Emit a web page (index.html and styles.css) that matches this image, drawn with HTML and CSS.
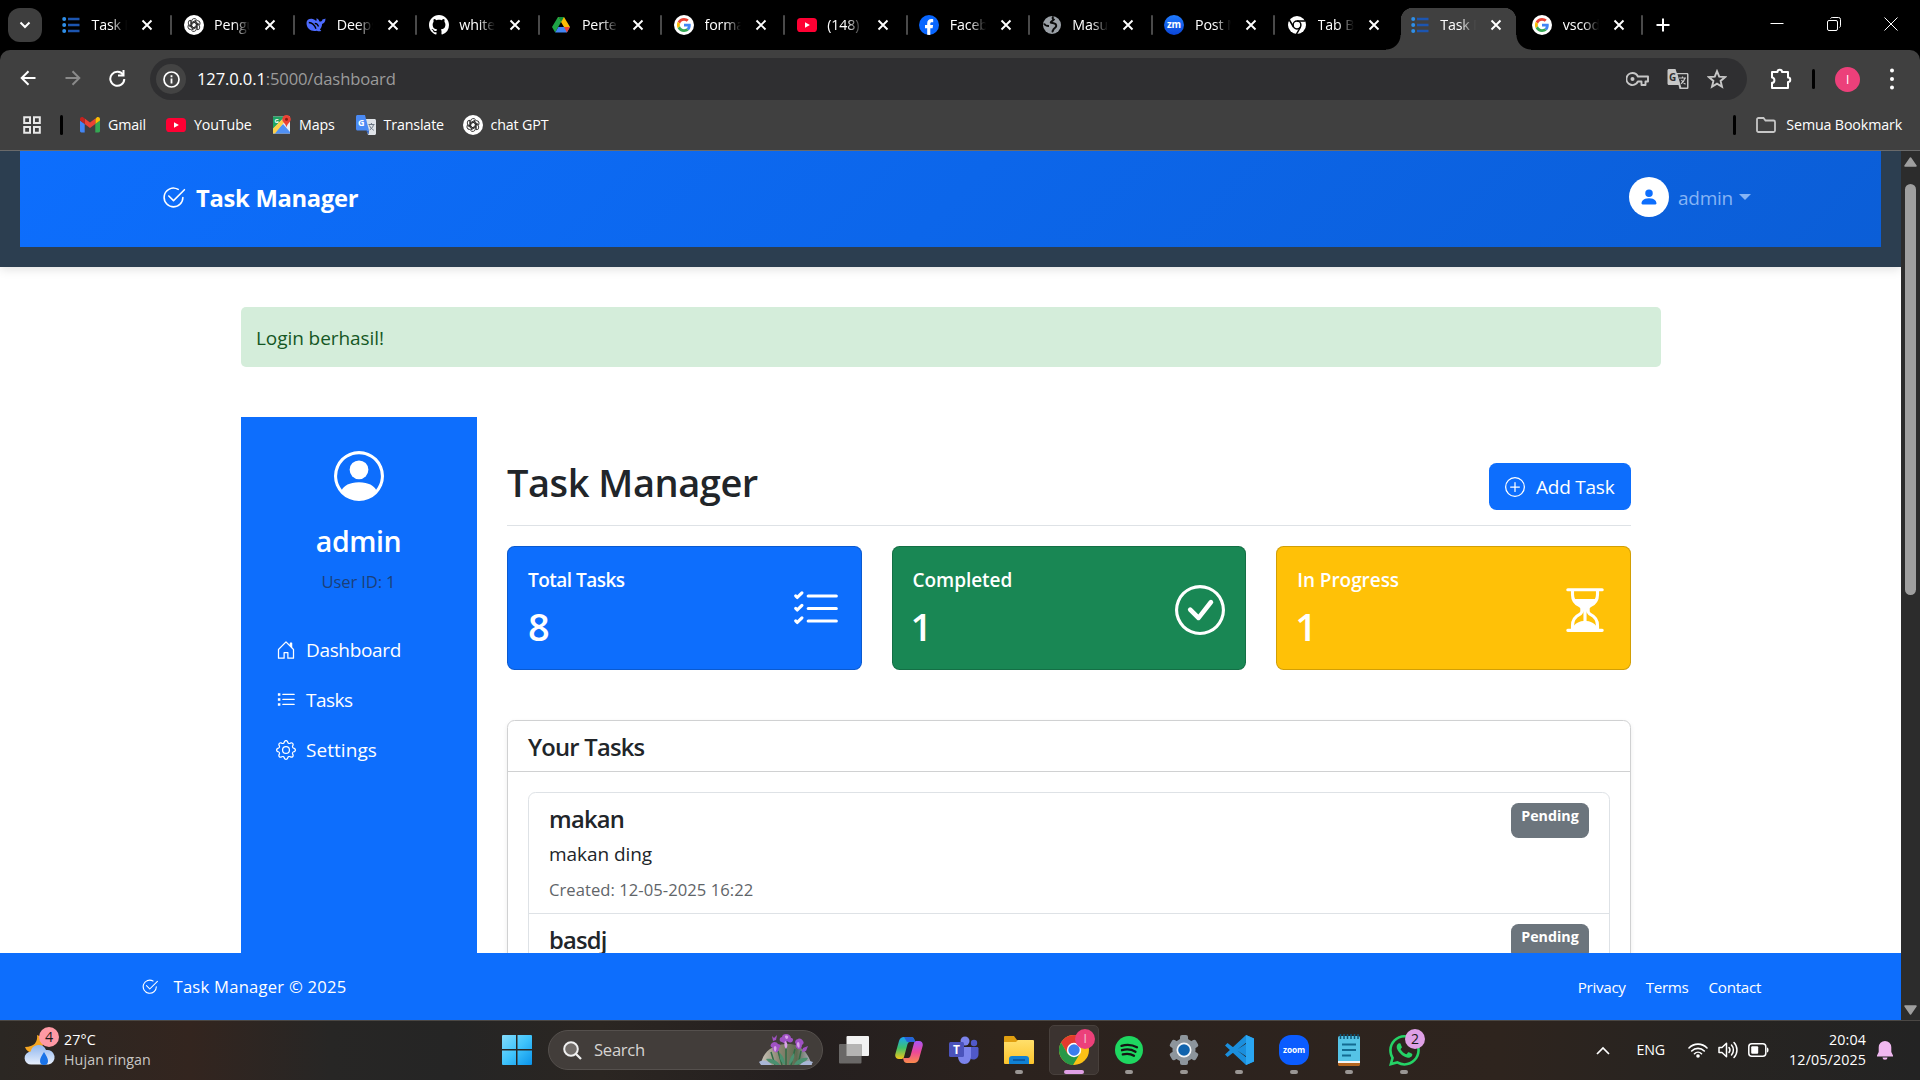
FILE: index.html
```html
<!DOCTYPE html>
<html lang="en">
<head>
<meta charset="utf-8">
<title>Task Manager</title>
<link rel="stylesheet" href="styles.css">
</head>
<body>
<svg class="defs" aria-hidden="true">
  <defs>
    <linearGradient id="g-zoom" x1="0" y1="0" x2="0" y2="1"><stop offset="0" stop-color="#1f7bff"/><stop offset="1" stop-color="#0b45d8"/></linearGradient>
    <linearGradient id="g-win" x1="0" y1="0" x2="1" y2="1"><stop offset="0" stop-color="#84dcfb"/><stop offset=".5" stop-color="#3fc3fb"/><stop offset="1" stop-color="#0a93ea"/></linearGradient>
    <linearGradient id="g-cloud" x1="0" y1="0" x2="0" y2="1"><stop offset="0" stop-color="#8fb6ef"/><stop offset="1" stop-color="#e8effc"/></linearGradient>
    <linearGradient id="g-cop1" x1="0" y1="0" x2="0" y2="1"><stop offset="0" stop-color="#1aa5f5"/><stop offset=".5" stop-color="#3fc06a"/><stop offset="1" stop-color="#f5c518"/></linearGradient>
    <linearGradient id="g-cop2" x1="0" y1="0" x2="0" y2="1"><stop offset="0" stop-color="#a855f7"/><stop offset=".5" stop-color="#ec4899"/><stop offset="1" stop-color="#fb8b4b"/></linearGradient>
    <linearGradient id="g-folder" x1="0" y1="0" x2="0" y2="1"><stop offset="0" stop-color="#ffdf6b"/><stop offset="1" stop-color="#fcc42c"/></linearGradient>
    <linearGradient id="g-rock" x1="0" y1="0" x2="1" y2="0"><stop offset="0" stop-color="#c9c4b8"/><stop offset=".35" stop-color="#8b8672"/><stop offset=".7" stop-color="#5d6a50"/><stop offset="1" stop-color="#b3b3c4"/></linearGradient>
  </defs>
  <symbol id="i-list" viewBox="0 0 20 20"><g fill="#2f8fe8"><circle cx="3.2" cy="4" r="2"/><circle cx="3.2" cy="10" r="2"/><circle cx="3.2" cy="16" r="2"/></g><path d="M7 4h11.5M7 10h11.5M7 16h11.5" stroke="#1c55b0" stroke-width="2.6"/></symbol>
  <symbol id="i-gpt" viewBox="0 0 20 20"><circle cx="10" cy="10" r="10" fill="#fff"/><g fill="none" stroke="#222" stroke-width=".9" stroke-linejoin="round"><path id="gpt-a" d="M7.6 11.4V6.200a2.700 2.700 0 0 1 4.900-1.500M12.400 4.900 8 7.400v2.400"/><use href="#gpt-a" transform="rotate(60 10 10)"/><use href="#gpt-a" transform="rotate(120 10 10)"/><use href="#gpt-a" transform="rotate(180 10 10)"/><use href="#gpt-a" transform="rotate(240 10 10)"/><use href="#gpt-a" transform="rotate(300 10 10)"/></g></symbol>
  <symbol id="i-google" viewBox="-10 -10 68 68"><circle cx="24" cy="24" r="34" fill="#fff"/><path fill="#EA4335" d="M24 9.500c3.540 0 6.710 1.220 9.210 3.600l6.850-6.850C35.900 2.380 30.470 0 24 0 14.620 0 6.510 5.380 2.560 13.220l7.980 6.190C12.430 13.720 17.740 9.500 24 9.500z"/><path fill="#4285F4" d="M46.980 24.550c0-1.570-.15-3.090-.38-4.550H24v9.020h12.940c-.58 2.960-2.260 5.480-4.780 7.180l7.730 6c4.510-4.180 7.090-10.360 7.090-17.650z"/><path fill="#FBBC05" d="M10.530 28.590c-.48-1.450-.76-2.990-.76-4.590s.27-3.140.76-4.590l-7.980-6.190C.92 16.460 0 20.120 0 24c0 3.880.92 7.540 2.560 10.780l7.970-6.190z"/><path fill="#34A853" d="M24 48c6.480 0 11.930-2.130 15.890-5.810l-7.730-6c-2.150 1.450-4.920 2.300-8.160 2.300-6.260 0-11.570-4.220-13.470-9.910l-7.980 6.190C6.510 42.620 14.620 48 24 48z"/></symbol>
  <symbol id="i-yt" viewBox="0 0 20 20"><rect y="3" width="20" height="14" rx="3.600" fill="#ff0033"/><path d="M8 7.200v5.600l4.900-2.800z" fill="#fff"/></symbol>
  <symbol id="b-check2c" viewBox="0 0 16 16"><path d="M2.500 8a5.500 5.500 0 0 1 8.250-4.764.5.5 0 0 0 .5-.866A6.500 6.500 0 1 0 14.500 8a.5.5 0 0 0-1 0 5.500 5.500 0 1 1-11 0z"/><path d="M15.354 3.354a.5.5 0 0 0-.708-.708L8 9.293 5.354 6.646a.5.5 0 1 0-.708.708l3 3a.5.5 0 0 0 .708 0l7-7z"/></symbol>
  <symbol id="b-person" viewBox="0 0 16 16"><path d="M3 14s-1 0-1-1 1-4 6-4 6 3 6 4-1 1-1 1H3Zm5-6a3 3 0 1 0 0-6 3 3 0 0 0 0 6Z"/></symbol>
  <symbol id="b-personc" viewBox="0 0 16 16"><path d="M11 6a3 3 0 1 1-6 0 3 3 0 0 1 6 0z"/><path fill-rule="evenodd" d="M0 8a8 8 0 1 1 16 0A8 8 0 0 1 0 8zm8-7a7 7 0 0 0-5.468 11.370C3.242 11.226 4.805 10 8 10s4.757 1.225 5.468 2.370A7 7 0 0 0 8 1z"/></symbol>
  <symbol id="b-house" viewBox="0 0 16 16"><path d="M8.354 1.146a.5.5 0 0 0-.708 0l-6 6A.5.5 0 0 0 1.500 7.500v7a.5.5 0 0 0 .5.5h4.500a.5.5 0 0 0 .5-.5v-4h2v4a.5.5 0 0 0 .5.5H14a.5.5 0 0 0 .5-.5v-7a.5.5 0 0 0-.146-.354L13 5.793V2.500a.5.5 0 0 0-.5-.5h-1a.5.5 0 0 0-.5.5v1.293L8.354 1.146zM2.500 14V7.707l5.500-5.500 5.500 5.500V14H10v-4a.5.5 0 0 0-.5-.5h-3a.5.5 0 0 0-.5.5v4H2.500z"/></symbol>
  <symbol id="b-task" viewBox="0 0 16 16"><path d="M1.500 2.500h2v2h-2zM1.500 6.500h2v2h-2zM1.500 10.500h2v2h-2z"/><path d="M5.500 3h9a.5.5 0 0 1 0 1h-9a.5.5 0 0 1 0-1zM5.500 7a.5.5 0 0 0 0 1h9a.5.5 0 0 0 0-1h-9zm0 4a.5.5 0 0 0 0 1h9a.5.5 0 0 0 0-1h-9z"/></symbol>
  <symbol id="b-gear" viewBox="0 0 16 16"><path d="M8 4.754a3.246 3.246 0 1 0 0 6.492 3.246 3.246 0 0 0 0-6.492zM5.754 8a2.246 2.246 0 1 1 4.492 0 2.246 2.246 0 0 1-4.492 0z"/><path d="M9.796 1.343c-.527-1.790-3.065-1.790-3.592 0l-.094.319a.873.873 0 0 1-1.255.52l-.292-.16c-1.640-.892-3.433.902-2.540 2.541l.159.292a.873.873 0 0 1-.52 1.255l-.319.094c-1.790.527-1.790 3.065 0 3.592l.319.094a.873.873 0 0 1 .52 1.255l-.16.292c-.892 1.640.901 3.434 2.541 2.540l.292-.159a.873.873 0 0 1 1.255.52l.094.319c.527 1.790 3.065 1.790 3.592 0l.094-.319a.873.873 0 0 1 1.255-.52l.292.16c1.640.893 3.434-.902 2.540-2.541l-.159-.292a.873.873 0 0 1 .52-1.255l.319-.094c1.790-.527 1.790-3.065 0-3.592l-.319-.094a.873.873 0 0 1-.52-1.255l.16-.292c.893-1.640-.902-3.433-2.541-2.540l-.292.159a.873.873 0 0 1-1.255-.52l-.094-.319zm-2.633.283c.246-.835 1.428-.835 1.674 0l.094.319a1.873 1.873 0 0 0 2.693 1.115l.291-.16c.764-.415 1.600.42 1.184 1.185l-.159.292a1.873 1.873 0 0 0 1.116 2.692l.318.094c.835.246.835 1.428 0 1.674l-.319.094a1.873 1.873 0 0 0-1.115 2.693l.16.291c.415.764-.42 1.600-1.185 1.184l-.291-.159a1.873 1.873 0 0 0-2.693 1.116l-.094.318c-.246.835-1.428.835-1.674 0l-.094-.319a1.873 1.873 0 0 0-2.692-1.115l-.292.16c-.764.415-1.600-.42-1.184-1.185l.159-.291A1.873 1.873 0 0 0 1.945 8.930l-.319-.094c-.835-.246-.835-1.428 0-1.674l.319-.094A1.873 1.873 0 0 0 3.060 4.377l-.16-.292c-.415-.764.42-1.600 1.185-1.184l.292.159a1.873 1.873 0 0 0 2.692-1.115l.094-.319z"/></symbol>
  <symbol id="b-listcheck" viewBox="0 0 16 16"><path d="M5.500 3h9a.5.5 0 0 1 0 1h-9a.5.5 0 0 1 0-1zm0 4h9a.5.5 0 0 1 0 1h-9a.5.5 0 0 1 0-1zm0 4h9a.5.5 0 0 1 0 1h-9a.5.5 0 0 1 0-1z"/><path id="lc" d="M3.854 2.146a.5.5 0 0 1 0 .708l-1.500 1.500a.5.5 0 0 1-.708 0l-.5-.5a.5.5 0 1 1 .708-.708L2 3.293l1.146-1.147a.5.5 0 0 1 .708 0z"/><use href="#lc" y="4"/><use href="#lc" y="8"/></symbol>
  <symbol id="b-checkc" viewBox="0 0 16 16"><path d="M8 15A7 7 0 1 1 8 1a7 7 0 0 1 0 14zm0 1A8 8 0 1 0 8 0a8 8 0 0 0 0 16z"/><path d="M10.970 4.970a.235.235 0 0 0-.02.022L7.477 9.417 5.384 7.323a.75.75 0 0 0-1.060 1.060L6.970 11.030a.75.75 0 0 0 1.079-.02l3.992-4.990a.75.75 0 0 0-1.071-1.050z"/></symbol>
  <symbol id="b-plusc" viewBox="0 0 16 16"><path d="M8 15A7 7 0 1 1 8 1a7 7 0 0 1 0 14zm0 1A8 8 0 1 0 8 0a8 8 0 0 0 0 16z"/><path d="M8 4a.5.5 0 0 1 .5.5v3h3a.5.5 0 0 1 0 1h-3v3a.5.5 0 0 1-1 0v-3h-3a.5.5 0 0 1 0-1h3v-3A.5.5 0 0 1 8 4z"/></symbol>
  <symbol id="b-hour" viewBox="0 0 16 16"><path d="M2.500 15a.5.5 0 1 1 0-1h1v-1a4.500 4.500 0 0 1 2.557-4.060c.29-.139.443-.377.443-.59v-.7c0-.213-.154-.451-.443-.59A4.500 4.500 0 0 1 3.500 3V2h-1a.5.5 0 0 1 0-1h11a.5.5 0 0 1 0 1h-1v1a4.500 4.500 0 0 1-2.557 4.060c-.29.139-.443.377-.443.59v.7c0 .213.154.451.443.59A4.500 4.500 0 0 1 12.500 13v1h1a.5.5 0 0 1 0 1h-11zm2-13v1c0 .537.12 1.045.337 1.500h6.326c.216-.455.337-.963.337-1.500V2h-7zm3 6.350c0 .701-.478 1.236-1.011 1.492A3.500 3.500 0 0 0 4.500 13s.866-1.299 3-1.480V8.350zm1 0v3.170c2.134.181 3 1.480 3 1.480a3.500 3.500 0 0 0-1.989-3.158C8.978 9.586 8.500 9.052 8.500 8.351z"/></symbol>
  <symbol id="i-x" viewBox="0 0 12 12"><path d="m1.500 1.500 9 9m0-9-9 9" stroke="#fff" stroke-width="1.900" fill="none"/></symbol>
</svg>

<div class="tabstrip">
  <div class="tabsearch"><svg width="12" height="12" viewBox="0 0 12 12"><path d="m1.500 3.500 4.500 4.500 4.500-4.500" fill="none" stroke="#fff" stroke-width="2"/></svg></div>
  <div class="tabs">
    <div class="tab"><svg class="fav"><use href="#i-list"/></svg><span class="tt">Task M</span><svg class="x"><use href="#i-x"/></svg></div>
    <div class="tab"><svg class="fav"><use href="#i-gpt"/></svg><span class="tt">Pengu</span><svg class="x"><use href="#i-x"/></svg></div>
    <div class="tab"><svg class="fav" viewBox="0 0 20 20"><path d="M.5 8C.5 5.200 2.800 3.600 5.600 3.800c1.700.1 3 1 4.500 2.200.6-.5.600-1.500.3-2.800 1.700.5 2.700 1.900 3 3.300 1.600.3 2.900-.3 3.200-2.300 1 .1 2 0 2.900-.6-.1 3.200-1.300 5-3.400 5.400-.1 2.600-1.100 4.300-2.300 5.500.7.500 1.500.8 1.400 1.300-1.100.9-3.200.6-4.300-.1C5.200 17 .5 13.600.5 8z" fill="#4d6bfe"/><path d="M2.800 7.500c3 .1 5.800 2.800 7.200 6.300M8.800 8.300c1.700.1 3.200 1.300 3.700 3.200" fill="none" stroke="#000" stroke-width="1.300"/></svg><span class="tt">Deeps</span><svg class="x"><use href="#i-x"/></svg></div>
    <div class="tab"><svg class="fav" viewBox="0 0 16 16"><path fill="#fff" d="M8 0C3.580 0 0 3.580 0 8c0 3.540 2.290 6.530 5.470 7.590.4.070.55-.17.55-.38 0-.19-.01-.82-.01-1.490-2.010.37-2.530-.49-2.690-.94-.09-.23-.48-.94-.82-1.130-.28-.15-.68-.52-.01-.53.63-.01 1.080.58 1.230.82.72 1.210 1.870.87 2.330.66.070-.52.28-.87.51-1.070-1.780-.2-3.640-.89-3.640-3.950 0-.87.31-1.590.82-2.150-.08-.2-.36-1.020.08-2.120 0 0 .67-.21 2.200.82.64-.18 1.320-.27 2-.27.68 0 1.360.09 2 .27 1.530-1.040 2.200-.82 2.200-.82.44 1.100.16 1.920.08 2.120.51.56.82 1.270.82 2.150 0 3.070-1.870 3.750-3.650 3.950.29.25.54.73.54 1.480 0 1.070-.01 1.930-.01 2.200 0 .21.15.46.55.38A8.010 8.010 0 0 0 16 8c0-4.420-3.580-8-8-8z"/></svg><span class="tt">whitel</span><svg class="x"><use href="#i-x"/></svg></div>
    <div class="tab"><svg class="fav" viewBox="0 0 20 20"><path d="M7 2h6L7.200 12 4.200 17.600 1 12z" fill="#1ea446"/><path d="M7 2h6l6 10h-6z" fill="#fbbc04"/><path d="M7 2h6l-3 5.200z" fill="#0f8c3a"/><path d="M4.200 17.600 7.300 12H19l-3.100 5.600z" fill="#4285f4"/><path d="M13 12h6l-3.100 5.600z" fill="#ea4335"/></svg><span class="tt">Perten</span><svg class="x"><use href="#i-x"/></svg></div>
    <div class="tab"><svg class="fav"><use href="#i-google"/></svg><span class="tt">forma</span><svg class="x"><use href="#i-x"/></svg></div>
    <div class="tab"><svg class="fav"><use href="#i-yt"/></svg><span class="tt">(148)</span><svg class="x"><use href="#i-x"/></svg></div>
    <div class="tab"><svg class="fav" viewBox="0 0 20 20"><circle cx="10" cy="10" r="10" fill="#0866ff"/><path d="M8.200 19.800v-6.600H6v-3.100h2.200V8.600c0-3 1.400-4.500 4.300-4.500.6 0 1.300.1 1.700.2v2.900h-1.300c-1.300 0-1.600.6-1.600 1.700v1.200h2.800l-.5 3.100h-2.300v6.700z" fill="#fff"/></svg><span class="tt">Faceb</span><svg class="x"><use href="#i-x"/></svg></div>
    <div class="tab"><svg class="fav" viewBox="0 0 20 20"><circle cx="10" cy="10" r="9" fill="#9aa0a6"/><path d="M11.500 1.500c-1.500.9-1 2.500.3 3.200-.6 1.300-3 1.300-3 2.800 1.500.8 4.700.2 5.400 2.600.8 2.500-2.500 2.700-3 4.900-.2 1-.5 1.500-1.500 1.800M2 8.500c.8 2 2.500 2.500 5 2.500" fill="none" stroke="#0c0c0c" stroke-width="2"/></svg><span class="tt">Masuk</span><svg class="x"><use href="#i-x"/></svg></div>
    <div class="tab"><svg class="fav" viewBox="0 0 20 20"><circle cx="10" cy="10" r="10" fill="url(#g-zoom)"/><text x="10" y="13" font-size="10" font-weight="700" fill="#fff" text-anchor="middle" textLength="14" lengthAdjust="spacingAndGlyphs">zm</text></svg><span class="tt">Post M</span><svg class="x"><use href="#i-x"/></svg></div>
    <div class="tab nosep"><svg class="fav" viewBox="0 0 20 20"><circle cx="10" cy="10" r="9" fill="#fff"/><circle cx="10" cy="10" r="3.900" fill="#fff" stroke="#000" stroke-width="1.500"/><path d="M10 5.900h8.200M6.500 12 2.400 5M13.500 12l-4 7.200" stroke="#000" stroke-width="1.500"/></svg><span class="tt">Tab Ba</span><svg class="x"><use href="#i-x"/></svg></div>
    <div class="tab active nosep"><svg class="fav"><use href="#i-list"/></svg><span class="tt">Task M</span><svg class="x"><use href="#i-x"/></svg></div>
    <div class="tab"><svg class="fav"><use href="#i-google"/></svg><span class="tt">vscod</span><svg class="x"><use href="#i-x"/></svg></div>
  </div>
  <svg class="newtab" width="14" height="14" viewBox="0 0 14 14"><path d="M7 .5v13M.5 7h13" stroke="#fff" stroke-width="2"/></svg>
  <div class="winctl">
    <svg width="14" height="14" viewBox="0 0 14 14"><path d="M.5 6.500h13" stroke="#fff"/></svg>
    <svg width="14" height="14" viewBox="0 0 14 14"><g fill="none" stroke="#fff"><rect x=".5" y="3.500" width="10" height="10" rx="1.500"/><path d="M3.500 1.500c.4-.7 1-1 1.700-1h6.300a2 2 0 0 1 2 2v6.300c0 .7-.3 1.300-1 1.700"/></g></svg>
    <svg width="14" height="14" viewBox="0 0 14 14"><path d="m.5.5 13 13m0-13-13 13" stroke="#fff" fill="none"/></svg>
  </div>
</div>

<div class="toolbar">
  <div class="nav-btns">
    <svg width="16" height="16" viewBox="0 0 16 16"><path d="M15.500 8H2M8.500 1.200 1.700 8l6.800 6.800" fill="none" stroke="#fff" stroke-width="2"/></svg>
    <svg width="16" height="16" viewBox="0 0 16 16"><path d="M.5 8H14M7.500 1.200 14.300 8l-6.800 6.800" fill="none" stroke="#8a8a8a" stroke-width="2"/></svg>
    <svg width="17" height="17" viewBox="0 0 17 17"><path d="M14.300 5.200A7 7 0 1 0 15.300 9" fill="none" stroke="#fff" stroke-width="2"/><path d="M15.500 0v6.500H9V4.500h4.500V0z" fill="#fff"/></svg>
  </div>
  <div class="omnibox">
    <span class="info"><svg width="17" height="17" viewBox="0 0 17 17"><circle cx="8.500" cy="8.500" r="7.500" fill="none" stroke="#fff" stroke-width="1.700"/><path d="M8.500 7.500v5M8.500 4.300v1.900" stroke="#fff" stroke-width="1.800"/></svg></span>
    <span class="url"><b>127.0.0.1</b>:5000/dashboard</span>
    <span class="omni-icons">
      <svg width="23" height="14" viewBox="0 0 23 14"><path d="M6.500 1a6 6 0 1 0 5.400 8.500h3.600V13h4V9.500H22V4.500H11.900A6 6 0 0 0 6.500 1z" fill="none" stroke="#c7c7c7" stroke-width="1.900" stroke-linejoin="round"/><circle cx="6.500" cy="7" r="2" fill="#c7c7c7"/></svg>
      <svg width="22" height="21" viewBox="0 0 22 21"><path d="M2 0h6.500l1.300 4H20c1 0 1.500.6 1.500 1.500v13c0 1-.6 1.500-1.500 1.500h-7.500l-1-4H2c-1 0-1.500-.6-1.500-1.500v-13C.5.600 1.100 0 2 0z" fill="#c7c7c7"/><path d="m10.500 5.300 3.800 13.200H20V5.300z" fill="#2f2f31"/><text x="2" y="11.500" font-size="10" font-weight="700" fill="#2f2f31">G</text><path d="M12 9h7M15.500 7.500V9M18 9c-.6 2.600-2 4.200-4 5.700M14.500 11c.9 1.800 2 3 4 4.200" fill="none" stroke="#c7c7c7" stroke-width="1.200"/></svg>
      <svg width="20" height="20" viewBox="0 0 20 20"><path d="m10 2.200 2.200 5.500 5.900.4-4.500 3.800 1.400 5.800L10 14.600l-5 3.100 1.400-5.800L1.900 8.100l5.900-.4z" fill="none" stroke="#c7c7c7" stroke-width="1.900"/></svg>
    </span>
  </div>
  <div class="tool-right">
    <svg class="puzzle" width="22" height="22" viewBox="0 0 22 22"><path d="M2 4h5.500c0-3 4.500-3 4.500 0h6v5.500c3 0 3 4.500 0 4.500v6H2v-5.200c3.200 0 3.200-5.300 0-5.300z" fill="none" stroke="#fff" stroke-width="2" stroke-linejoin="round"/></svg>
    <i class="vsep"></i>
    <span class="profile">I</span>
    <svg width="4" height="22" viewBox="0 0 4 22"><g fill="#fff"><circle cx="2" cy="2.500" r="2"/><circle cx="2" cy="11" r="2"/><circle cx="2" cy="19.500" r="2"/></g></svg>
  </div>
</div>

<div class="bookmarks">
  <svg class="apps" width="18" height="18" viewBox="0 0 18 18"><path d="M1.200 1.200H7V7H1.200zM11 1.200h5.800V7H11zM1.200 11H7v5.800H1.200zM11 11h5.800v5.800H11z" fill="none" stroke="#e8e8e8" stroke-width="2"/></svg>
  <i class="vsep"></i>
  <a class="bm bm1"><svg class="fav" viewBox="0 0 20 20"><path d="M1.400 17.500h3.300V9L0 5.500v10.600c0 .8.600 1.400 1.400 1.400z" fill="#4285f4"/><path d="M15.300 17.500h3.300c.8 0 1.400-.6 1.400-1.400V5.500L15.300 9z" fill="#34a853"/><path d="M15.300 4v5L20 5.500V4.200c0-2-2-2.800-3.300-1.700z" fill="#fbbc04"/><path d="M4.700 9V3.500L10 7.500l5.300-4V9L10 13z" fill="#ea4335"/><path d="M0 4.200v1.300L4.700 9V3.600L3.300 2.500C2 1.400 0 2.200 0 4.200z" fill="#c5221f"/></svg>Gmail</a>
  <a class="bm bm2"><svg class="fav"><use href="#i-yt"/></svg>YouTube</a>
  <a class="bm bm3"><svg class="fav" viewBox="0 0 20 20"><rect x="1" y="1.500" width="17" height="17" fill="#e9ecef"/><path d="M1 1.500h12L1 14z" fill="#1fa463"/><path d="M1 18.500 11 9l7 8v1.500z" fill="#4f90f5"/><path d="m1 13.500 9-9 2 3L3 18.500H1z" fill="#fdd04b"/><text x="2.500" y="8" font-size="6" font-weight="700" fill="#fff">G</text><path d="M14.500 0a4.300 4.300 0 0 1 4.300 4.300c0 3-3.500 4.200-4.300 8-.8-3.800-4.300-5-4.300-8A4.300 4.300 0 0 1 14.500 0z" fill="#ea4335"/><circle cx="14.500" cy="4.300" r="1.500" fill="#8c1a12"/></svg>Maps</a>
  <a class="bm bm4"><svg class="fav" viewBox="0 0 20 20"><path d="M8 4h10.500c.8 0 1.500.7 1.500 1.500v13c0 .8-.7 1.500-1.500 1.500H12z" fill="#dfe3e8"/><path d="M1.500 0H9l4 15.500H1.500C.7 15.500 0 14.800 0 14V1.500C0 .7.7 0 1.500 0z" fill="#4a8af4"/><path d="m13 15.500-3 .1 2.600 4.200z" fill="#2f62c4"/><text x="2" y="11" font-size="9" font-weight="700" fill="#fff">G</text><path d="M12.500 9.500h6M15.400 8v1.500M17.500 9.500c-.4 2.400-2 4.200-3.800 5.400M13.500 10.500c.8 2 2.400 3.600 4.300 4.800" fill="none" stroke="#6b7683" stroke-width="1"/></svg>Translate</a>
  <a class="bm bm5"><svg class="fav"><use href="#i-gpt"/></svg>chat GPT</a>
  <i class="vsep end"></i>
  <a class="bm bm6"><svg width="20" height="16" viewBox="0 0 20 16"><path d="M1 13.500v-11C1 1.700 1.700 1 2.500 1h5l2 2.500h8c.8 0 1.500.7 1.500 1.500v8.500c0 .8-.7 1.500-1.500 1.500h-15c-.8 0-1.500-.7-1.500-1.500z" fill="none" stroke="#c7c7c7" stroke-width="1.800"/></svg>Semua Bookmark</a>
</div>

<div class="viewport">
  <div class="page">
    <div class="content">
      <header class="site-header">
        <nav class="navbar">
          <a class="brand"><svg width="25" height="25"><use href="#b-check2c"/></svg><span>Task Manager</span></a>
          <div class="user"><span class="avatar"><svg width="20" height="20"><use href="#b-person"/></svg></span><span class="uname">admin</span><i class="caret"></i></div>
        </nav>
      </header>
      <div class="container">
        <div class="alert">Login berhasil!</div>
        <div class="row">
          <aside class="sidebar">
            <svg class="bigavatar" width="50" height="50"><use href="#b-personc"/></svg>
            <h4>admin</h4>
            <small>User ID: 1</small>
            <ul>
              <li class="tight"><svg width="20" height="20"><use href="#b-house"/></svg>Dashboard</li>
              <li class="tighter"><svg width="20" height="20"><use href="#b-task"/></svg>Tasks</li>
              <li class="loose"><svg width="20" height="20"><use href="#b-gear"/></svg>Settings</li>
            </ul>
          </aside>
          <main class="main">
            <div class="titlebar"><h1>Task Manager</h1><button class="btn"><svg width="20" height="20"><use href="#b-plusc"/></svg>Add Task</button></div>
            <div class="cards">
              <div class="card blue"><div><h6 class="tighter">Total Tasks</h6><h2>8</h2></div><svg width="50" height="50"><use href="#b-listcheck"/></svg></div>
              <div class="card green"><div><h6>Completed</h6><h2 class="one">1</h2></div><svg width="50" height="50"><use href="#b-checkc"/></svg></div>
              <div class="card yellow"><div><h6>In Progress</h6><h2 class="one">1</h2></div><svg width="50" height="50"><use href="#b-hour"/></svg></div>
            </div>
            <section class="panel">
              <h5 class="panel-head">Your Tasks</h5>
              <div class="list">
                <div class="item"><div><h5>makan</h5><p>makan ding</p><small>Created: 12-05-2025 16:22</small></div><span class="badge">Pending</span></div>
                <div class="item"><div><h5>basdj</h5></div><span class="badge">Pending</span></div>
              </div>
            </section>
          </main>
        </div>
      </div>
    </div>
    <footer class="footer">
      <span class="copy"><svg width="17.500" height="17.500"><use href="#b-check2c"/></svg>Task Manager © 2025</span>
      <span class="links"><a>Privacy</a><a>Terms</a><a>Contact</a></span>
    </footer>
  </div>
  <div class="scrollbar">
    <svg width="13" height="10" viewBox="0 0 13 10"><path d="M6.500 1 12 9H1z" fill="#9f9f9f" stroke="#9f9f9f" stroke-width="1.500" stroke-linejoin="round"/></svg>
    <i class="thumb"></i>
    <svg class="down" width="13" height="10" viewBox="0 0 13 10"><path d="M6.500 9 12 1H1z" fill="#9f9f9f" stroke="#9f9f9f" stroke-width="1.500" stroke-linejoin="round"/></svg>
  </div>
</div>

<div class="taskbar">
  <div class="weather">
    <span class="wicon"><svg width="32" height="32" viewBox="0 0 32 32"><path d="M13 1c1 7-3 12-12 12 2 6 10 8 15 3S20 3 13 1z" fill="#f5a623"/><path d="M7.500 30.500a6.500 6.500 0 0 1-.8-13A8 8 0 0 1 22 16a7.300 7.300 0 0 1 2.500 14.500z" fill="url(#g-cloud)"/><path d="M20 18c2.500 4 4 6.300 4 9a4 4 0 0 1-8 0c0-2.700 1.500-5 4-9z" fill="#1a73e8"/></svg><b class="wbadge">4</b></span>
    <div class="wtext"><span>27°C</span><span class="dim">Hujan ringan</span></div>
  </div>
  <svg class="start" width="30" height="30" viewBox="0 0 30 30"><path d="M1 0h13v14H0V1a1 1 0 0 1 1-1zM15.500 0H29a1 1 0 0 1 1 1v13H15.500zM0 15.500h14V30H1a1 1 0 0 1-1-1zM15.500 15.500H30V29a1 1 0 0 1-1 1H15.500z" fill="url(#g-win)"/></svg>
  <div class="search">
    <svg width="19" height="19" viewBox="0 0 19 19"><circle cx="8" cy="8" r="6.800" fill="#716c69" stroke="#f0f0f0" stroke-width="2"/><path d="m13 13 5 5" stroke="#f0f0f0" stroke-width="2.300"/></svg>
    <span>Search</span>
    <svg class="iris" width="56" height="32" viewBox="0 0 56 32"><path d="M3 31C4 20 12 11 28 10s22 10 26 21z" fill="url(#g-rock)"/><path d="M17 31 13 18M24 31l-4-14M28 31V12M33 31l4-16M40 31l3-14" stroke="#2f6b46" stroke-width="1.500" fill="none"/><path d="M22 31c-3-5-9-7-14-6 3 4 8 6 14 6zM36 31c2-5 8-8 14-7-2 4-8 7-14 7zM27 31c-5-3-6-8-5-12 4 4 5 8 5 12zM31 31c4-3 6-7 5-12-4 4-5 8-5 12z" fill="#4b9070"/><path d="M1 28c5-3 9-1 13 3H3zM42 31c3-4 8-5 13-3l-2 3z" fill="#a9b6d6"/><g fill="#a052c4"><path d="M28 0c3 0 5 2 5 4 2 0 3 2 1 4-2 1-4 0-5-1-1 2-3 3-5 1-2 0-3-2-2-4 1-1 2-1 2-1 0-2 2-3 4-3z"/><path d="M40 5c2-1 4 0 5 2 1 1 1 3-1 4 0 3-2 5-4 4s-3-3-2-5c-2-2 0-5 2-5zM14 9c2-2 5-1 6 1 3 0 3 3 1 4 0 3-2 5-4 4s-3-3-2-4c-3-1-3-3-1-5z"/><path d="m14 2 2 2 3-3-1 5-3 1zM45 14l5-2-2 5-4 1z"/></g><path d="M27 2c2-1 4 0 3 2s-3 1-3-2zM27 7c3 1 3 6 1 8-2-2-2-6-1-8zM40 8c2 0 2 5 1 6-2-1-3-5-1-6zM17 12c2 0 2 4 0 6-1-2-2-5 0-6z" fill="#d9a2ea"/></svg>
  </div>
  <div class="apps-row">
    <span class="app norun"><svg width="30" height="28" viewBox="0 0 30 28"><rect x="7.500" width="22.500" height="20" rx="1" fill="#f2f2f2"/><rect y="8" width="22.500" height="19.500" rx="1" fill="#6a6867"/><path d="M7.500 8h15v12h-15z" fill="#b5b4b3"/></svg></span>
    <span class="app norun"><svg width="28" height="28" viewBox="0 0 28 28"><path d="M9 1h7c2 0 3 1 3.500 3l.5 2h-5c-2 0-2.500 2-3 4l-3 11c-.5 1.500-1.500 2-3 2H4c-3 0-4.500-2.500-3.500-5.500L4 5c.8-2.500 2.500-4 5-4z" fill="url(#g-cop1)"/><path d="M9 1h7c2 0 3 1 3.500 3l.6 2H12z" fill="#2563d8"/><path d="M19 27h-7c-2 0-3-1-3.500-3L8 22h5c2 0 2.500-2 3-4l3-11c.5-1.500 1.500-2 3-2h2c3 0 4.500 2.500 3.500 5.500L24 23c-.8 2.500-2.500 4-5 4z" fill="url(#g-cop2)"/></svg></span>
    <span class="app norun"><svg width="30" height="28" viewBox="0 0 30 28"><circle cx="25" cy="7" r="3.200" fill="#5059c9"/><circle cx="16" cy="5" r="4.500" fill="#7b83eb"/><path d="M20 11h8c1 0 1.500.6 1.500 1.500V18c0 3-2 5.500-5 5.500s-4.500-2-4.500-5z" fill="#5059c9"/><path d="M9 11h13v9c0 4.500-2.500 8-6.500 8S9 24.500 9 20z" fill="#7b83eb"/><rect y="6" width="15" height="15" rx="1.500" fill="#4b53bc"/><text x="7.500" y="18" font-size="12" font-weight="700" fill="#fff" text-anchor="middle">T</text></svg></span>
    <span class="app"><svg width="30" height="28" viewBox="0 0 30 28"><path d="M1 0h9l3 4h15v8H0V1a1 1 0 0 1 1-1z" fill="#e09f10"/><path d="M0 6h12l2-2h15a1 1 0 0 1 1 1v22a1 1 0 0 1-1 1H1a1 1 0 0 1-1-1z" fill="url(#g-folder)"/><path d="M5 28v-5a3 3 0 0 1 3-3h14a3 3 0 0 1 3 3v5z" fill="#1081d4"/><path d="M9 24h12" stroke="#0a4f94" stroke-width="1.500"/></svg></span>
    <span class="app current"><svg width="30" height="30" viewBox="0 0 30 30"><circle cx="15" cy="15" r="15" fill="#fbc116"/><path d="M15 0A15 15 0 0 0 2 7.500l6.500 11L15 8h13A15 15 0 0 0 15 0z" fill="#e33b2e"/><path d="M2 7.500A15 15 0 0 0 14 30l7-11.500-12.500 0z" fill="#269847"/><circle cx="15" cy="15" r="7.200" fill="#fff"/><circle cx="15" cy="15" r="5.700" fill="#3b7ded"/></svg><b class="bub pink">I</b></span>
    <span class="app"><svg width="28" height="28" viewBox="0 0 28 28"><circle cx="14" cy="14" r="14" fill="#1ed760"/><path d="M6.500 9.800c5-1.500 11-1 15.500 1.500M7 14.200c4.500-1.300 9.500-.8 13.500 1.500M7.800 18.400c4-1 8-.6 11.200 1.300" fill="none" stroke="#151515" stroke-width="2.300" stroke-linecap="round"/></svg></span>
    <span class="app"><svg width="30" height="30" viewBox="0 0 30 30"><g fill="#8d959c"><circle cx="15" cy="15" r="11.500"/><rect id="teeth" x="11" y="0" width="8" height="30" rx="2"/><use href="#teeth" transform="rotate(60 15 15)"/><use href="#teeth" transform="rotate(120 15 15)"/></g><circle cx="15" cy="15" r="7.500" fill="#f4f6f8"/><circle cx="15" cy="15" r="5.800" fill="#1063ad"/></svg></span>
    <span class="app"><svg width="30" height="30" viewBox="0 0 30 30"><path d="M22.500 8.500v13L12.500 15zM22 0l8 3.500v23L22 30 1 10.500 3.500 8l19 14.500v-15L3.500 22 1 19.500z" fill="#1b8fdd"/><path d="M22 0l8 3.500v23L22 30z" fill="#2aa6f2"/></svg></span>
    <span class="app"><svg width="30" height="30" viewBox="0 0 30 30"><rect width="30" height="30" rx="12" fill="#0b5cff"/><text x="15" y="18" font-size="9" font-weight="700" fill="#fff" text-anchor="middle" textLength="22" lengthAdjust="spacingAndGlyphs">zoom</text></svg></span>
    <span class="app"><svg width="22" height="32" viewBox="0 0 22 32"><rect y="2" width="22" height="28" rx="1.500" fill="#55c3e6"/><path d="M0 27h22v2H0z" fill="#f4f4f4"/><path d="M0 29h22v1.500c0 .8-.6 1.500-1.500 1.500h-19C.6 32 0 31.300 0 30.500z" fill="#b5651d"/><path d="M4 10.500h14M4 16h14M4 21.500h9" stroke="#136a91" stroke-width="2"/><path d="M2.500 0v5M6 0v5M9.500 0v5M13 0v5M16.500 0v5M20 0v5" stroke="#0f5677" stroke-width="1.500"/></svg></span>
    <span class="app"><svg width="31" height="31" viewBox="0 0 16 16"><path fill="#25d366" d="M13.601 2.326A7.854 7.854 0 0 0 7.994 0C3.627 0 .068 3.558.064 7.926c0 1.399.366 2.760 1.057 3.965L0 16l4.204-1.102a7.933 7.933 0 0 0 3.790.965h.004c4.368 0 7.926-3.558 7.930-7.930A7.898 7.898 0 0 0 13.600 2.326zM7.994 14.521a6.573 6.573 0 0 1-3.356-.92l-.24-.144-2.494.654.666-2.433-.156-.251a6.560 6.560 0 0 1-1.007-3.505c0-3.626 2.957-6.584 6.591-6.584a6.560 6.560 0 0 1 4.660 1.931 6.557 6.557 0 0 1 1.928 4.660c-.004 3.639-2.961 6.592-6.592 6.592zm3.615-4.934c-.197-.099-1.170-.578-1.353-.646-.182-.065-.315-.099-.445.099-.133.197-.513.646-.627.775-.114.133-.232.148-.43.05-.197-.1-.836-.308-1.592-.985-.59-.525-.985-1.175-1.103-1.372-.114-.198-.011-.304.088-.403.087-.088.197-.232.296-.346.1-.114.133-.198.198-.33.065-.134.034-.248-.015-.347-.05-.099-.445-1.076-.612-1.470-.16-.389-.323-.335-.445-.34-.114-.007-.247-.007-.38-.007a.729.729 0 0 0-.529.247c-.182.198-.691.677-.691 1.654 0 .977.71 1.916.81 2.049.098.133 1.394 2.132 3.383 2.992.47.205.84.326 1.129.418.475.152.904.129 1.246.08.38-.058 1.171-.48 1.338-.943.164-.464.164-.86.114-.943-.049-.084-.182-.133-.38-.232z"/></svg><b class="bub violet">2</b></span>
  </div>
  <div class="tray">
    <svg class="chev" width="14" height="9" viewBox="0 0 14 9"><path d="m1 8 6-6 6 6" fill="none" stroke="#fff" stroke-width="1.700"/></svg>
    <span class="eng">ENG</span>
    <svg width="20" height="16" viewBox="0 0 20 16"><g fill="none" stroke="#fff" stroke-width="1.600" stroke-linecap="round"><path d="M1 6a12.500 12.500 0 0 1 18 0M3.700 9a8.900 8.900 0 0 1 12.600 0M6.500 11.700a5 5 0 0 1 7 0"/></g><circle cx="10" cy="14" r="1.800" fill="#fff"/></svg>
    <svg width="20" height="18" viewBox="0 0 20 18"><g fill="none" stroke="#fff" stroke-width="1.500" stroke-linejoin="round" stroke-linecap="round"><path d="M1 6.500h3L8.500 2.300v13.400L4 11.500H1z"/><path d="M11 6.500a4 4 0 0 1 0 5M13.500 4a7.500 7.500 0 0 1 0 10M16 1.500a11 11 0 0 1 0 15"/></g></svg>
    <svg width="21" height="14" viewBox="0 0 21 14"><rect x=".8" y=".8" width="17" height="12.400" rx="3" fill="none" stroke="#fff" stroke-width="1.500"/><rect x="3.200" y="3.200" width="7" height="7.600" rx="1" fill="#fff"/><path d="M19 4.500c1 .2 1.500 1 1.500 2.500s-.5 2.300-1.500 2.500z" fill="#fff"/></svg>
    <div class="clock"><span>20:04</span><span>12/05/2025</span></div>
    <svg class="bell" width="16" height="19" viewBox="0 0 16 19"><path d="M8 0a6.300 6.300 0 0 1 6.300 6.300V11l1.700 3.500v1H0v-1L1.700 11V6.300A6.300 6.300 0 0 1 8 0zM5.500 16.500h5a2.500 2.300 0 0 1-5 0z" fill="#f0b8f0"/></svg>
  </div>
</div>
</body>
</html>
```
FILE: styles.css
```css
* { box-sizing: border-box; }
body { margin: 0; width: 1920px; height: 1080px; overflow: hidden; display: flex; flex-direction: column; background: #000; font: 14.25px/20px "Open Sans", "Noto Sans", sans-serif; letter-spacing: -.01em; color: #fff; }
svg { display: block; flex: none; fill: currentColor; }
h1, h2, h4, h5, h6, p, ul { margin: 0; padding: 0; font-weight: 600; }
i { display: block; flex: none; }
.defs { width: 0; height: 0; position: absolute; }
.fav { width: 20px; height: 20px; }

/* tab strip */
.tabstrip { height: 50px; flex: none; display: flex; align-items: flex-start; background: #000; }
.tabsearch { width: 34px; height: 34px; margin: 8px 6.300px 0 8px; border-radius: 12px; background: #3e3e3e; display: grid; place-items: center; }
.tabs { display: flex; height: 50px; }
.tab { width: 122.620px; height: 34px; margin-top: 8px; padding: 0 17px 0 12.700px; display: flex; align-items: center; position: relative; }
.tab::after { content: ""; position: absolute; right: -1px; top: 7px; width: 2px; height: 20px; border-radius: 1px; background: #4a4a4a; }
.tab.nosep::after { display: none; }
.tab .fav, .tab .tt, .tab .x { position: relative; }
.tt { width: 36px; margin-left: 10.500px; overflow: hidden; white-space: nowrap; mask-image: linear-gradient(90deg, #000 55%, transparent); }
.x { width: 12px; height: 12px; margin-left: 14px; }
.tab.active { height: 42px; padding-bottom: 8px; }
.tab.active::before { content: ""; position: absolute; top: 0; bottom: 0; left: -11px; right: -11px; background:
  radial-gradient(circle at 0 0, transparent 14px, #404040 15px) left bottom / 15px 15px no-repeat,
  radial-gradient(circle at 100% 0, transparent 14px, #404040 15px) right bottom / 15px 15px no-repeat,
  radial-gradient(circle at 12px 12px, #404040 12px, transparent 12.500px) 15px 0 / 12px 12px no-repeat,
  radial-gradient(circle at 0 12px, #404040 12px, transparent 12.500px) right 15px top 0 / 12px 12px no-repeat,
  linear-gradient(#404040, #404040) 27px 0 / calc(100% - 54px) 12px no-repeat,
  linear-gradient(#404040, #404040) 15px 12px / calc(100% - 30px) 30px no-repeat; }
.newtab { margin: 18px 0 0 13.500px; }
.winctl { margin: 17px 22px 0 auto; display: flex; gap: 43px; }

/* toolbar */
.toolbar { height: 50px; flex: none; display: flex; align-items: center; padding: 8px 26px 0 20px; background: #404040; border-radius: 10px 10px 0 0; }
.nav-btns { display: flex; align-items: center; gap: 28.500px; width: 130px; padding-bottom: 2px; }
.omnibox { width: 1597px; height: 42px; border-radius: 21px; background: #2f2f31; display: flex; align-items: center; padding: 0 20px 0 6px; }
.info { width: 30px; height: 30px; border-radius: 50%; background: #434343; display: grid; place-items: center; }
.url { margin-left: 11px; font-size: 16.600px; color: #9b9b9b; line-height: 24px; }
.url b { font-weight: 400; color: #fff; }
.omni-icons { margin-left: auto; display: flex; align-items: center; gap: 18px; }
.tool-right { margin-left: auto; display: flex; align-items: center; }
.puzzle { margin-right: 20px; }
.vsep { width: 3px; height: 20px; border-radius: 2px; background: #000; }
.profile { width: 25px; height: 25px; margin: 0 30px 0 20px; border-radius: 50%; background: #ec407a; font-size: 12px; text-align: center; line-height: 25px; }

/* bookmarks bar */
.bookmarks { height: 51px; flex: none; display: flex; align-items: center; padding: 0 18px 0 23px; background: #404040; border-bottom: 1px solid #6a6a6a; }
.bookmarks .vsep { margin-left: 19px; }
.bm { display: flex; align-items: center; gap: 8px; white-space: nowrap; }
.bm1 { width: 86px; margin-left: 17px; }
.bm2 { width: 106px; }
.bm3 { width: 83.500px; gap: 7px; }
.bm4 { width: 107px; }
.bookmarks .end { margin-left: auto; }
.bm6 { margin-left: 20px; gap: 10px; }

/* web page viewport */
.viewport { height: 869px; flex: none; display: flex; }
.page { width: 1901px; display: flex; flex-direction: column; background: #fff; color: #212529; font-size: 19px; line-height: 30px; }
.content { flex: 1; min-height: 0; overflow: hidden; }
.site-header { padding: 0 20px 20px; background: #2c3e50; box-shadow: 0 2px 10px rgba(0,0,0,.13); }
.navbar { height: 96px; padding: 0 130px 4px 141px; display: flex; align-items: center; justify-content: space-between; background: linear-gradient(135deg, #0d6efd, #0b5ed7); color: #fff; }
.brand { display: flex; align-items: center; gap: 10px; font-size: 23.750px; font-weight: 700; letter-spacing: -.012em; }
.brand span { padding-top: 2px; }
.user { display: flex; align-items: center; color: #86b4f5; }
.uname { padding-top: 2px; letter-spacing: -.013em; }
.avatar { width: 40px; height: 40px; margin-right: 9px; border-radius: 50%; background: #fff; color: #0d6efd; display: grid; place-items: center; }
.caret { margin-left: 6px; border: 6px solid transparent; border-top-color: currentColor; border-bottom: 0; }
.container { width: 1420px; margin: 40px auto 0 241px; }
.alert { height: 60px; padding: 16px 15px 14px; border-radius: 5px; background: #d4edda; color: #155724; letter-spacing: -.004em; }
.row { margin-top: 50px; display: flex; }
.sidebar { width: 236px; height: 800px; padding: 34px 0 0 35px; background: #0d6efd; color: #fff; }
.bigavatar { margin-left: 58px; }
.sidebar h4 { margin: 22px 36px 0 0; text-align: center; font-size: 28.500px; line-height: 36px; letter-spacing: -.015em; }
.sidebar small { display: block; margin: 10px 36px 0 0; text-align: center; font-size: 16.600px; line-height: 26px; color: #1c4078; }
.sidebar ul { margin-top: 30px; list-style: none; font-weight: 400; }
.sidebar li { height: 50px; display: flex; align-items: center; gap: 10px; }
.tight { letter-spacing: -.018em; }
.tighter, .card h6.tighter { letter-spacing: -.027em; }
.loose { letter-spacing: .003em; }
.main { width: 1124px; margin-left: 30px; }
.titlebar { height: 109px; padding: 40px 0 0; display: flex; justify-content: space-between; border-bottom: 1px solid #dee2e6; }
.titlebar h1 { font-size: 38px; line-height: 48px; letter-spacing: -.012em; padding-top: 1px; }
.btn { width: 142px; height: 47px; margin-top: 6px; border: 0; border-radius: 7.500px; background: #0d6efd; color: #fff; font: inherit; letter-spacing: -.012em; display: flex; align-items: center; gap: 11px; padding: 0 16px; white-space: nowrap; }
.cards { margin-top: 20px; display: grid; grid-template-columns: repeat(3, 354.600px); gap: 30px; }
.card { height: 124px; padding: 3px 20px 0; border: 1px solid rgba(0,0,0,.175); border-radius: 7.500px; color: #fff; display: flex; align-items: center; justify-content: space-between; }
.card h6 { font-size: 19px; line-height: 24px; letter-spacing: -.003em; }
.card h2 { margin: 10px 0 1px; font-size: 38px; line-height: 48px; }
.card .one { margin-left: -2px; }
.blue { background: #0d6efd; }
.green { background: #198754; }
.yellow { background: #ffc107; }
.panel { height: 600px; margin-top: 50px; border: 1px solid #d0d1d2; border-radius: 7.500px; box-shadow: 0 2px 5px rgba(0,0,0,.075); }
.panel h5 { font-size: 23.750px; line-height: 30px; letter-spacing: -.032em; }
.panel .panel-head { height: 51px; padding: 11px 20px 0; border-bottom: 1px solid #d0d1d2; }
.list { margin: 20px 20px 0; border: 1px solid #dee2e6; border-radius: 7.500px; }
.item { height: 121px; padding: 10px 20px 0; display: flex; justify-content: space-between; align-items: flex-start; border-bottom: 1px solid #dee2e6; }
.item h5 { padding-top: 1px; }
.item p { margin-top: 5px; font-weight: 400; letter-spacing: -.0035em; }
.item small { display: block; margin-top: 8px; font-size: 16.600px; line-height: 26px; letter-spacing: .003em; color: #5f6569; }
.badge { width: 78px; height: 35px; border-radius: 7.500px; background: #6c757d; color: #fff; font-size: 14.250px; font-weight: 700; line-height: 15px; letter-spacing: 0; text-align: center; padding-top: 5px; }
.footer { height: 67px; flex: none; padding: 0 140px 0 141px; display: flex; align-items: center; justify-content: space-between; background: #0d6efd; color: #fff; }
.copy { display: flex; align-items: center; gap: 15px; font-size: 16.600px; letter-spacing: .0145em; }
.links { display: flex; gap: 20px; font-size: 15.200px; letter-spacing: -.02em; }
.scrollbar { width: 19px; background: #2c2c2c; display: flex; flex-direction: column; align-items: center; padding: 6px 0 5px; }
.thumb { width: 11px; height: 411px; margin-top: 17px; border-radius: 5.500px; background: #9f9f9f; }
.down { margin-top: auto; }

/* taskbar */
.taskbar { height: 60px; flex: none; display: flex; align-items: center; border-top: 1px solid #4b4845; padding-bottom: 1px; background: linear-gradient(90deg, #2b2723 0, #33251f 190px, #272625 330px, #252525 450px, #2b2622 600px, #241f1f 800px, #2b221e 1000px, #2e241e 1500px, #272421 1700px, #232323 1920px); }
.weather { width: 503px; padding-left: 24px; display: flex; align-items: center; gap: 8px; }
.wicon, .app { position: relative; }
.wbadge { position: absolute; left: 15px; top: -7px; width: 20px; height: 20px; border-radius: 50%; background: #ff99a4; color: #1a1a1a; font-weight: 400; text-align: center; line-height: 20px; }
.wtext, .clock { display: flex; flex-direction: column; padding-bottom: 1px; }
.wtext { letter-spacing: .007em; }
.dim { color: #c9c6c4; }
.start { margin-left: -1px; }
.search { width: 275px; height: 40px; margin-left: 16px; padding: 0 8px 0 14px; border: 1px solid #55504d; border-radius: 20px; background: #423d3a; display: flex; align-items: center; font-size: 16.600px; color: #d6d4d2; }
.search span { margin-left: 12px; letter-spacing: -.016em; }
.iris { margin-left: auto; }
.apps-row { margin-left: 6px; display: flex; }
.app { width: 50px; height: 50px; margin-right: 5px; display: grid; place-items: center; border-radius: 5px; }
.app::after { content: ""; position: absolute; left: 21px; bottom: 1px; width: 8px; height: 4px; border-radius: 2px; background: #9a9694; }
.app.norun::after { display: none; }
.app.current { background: #3b3330; border: 1px solid #48403c; }
.app.current::after { left: 14px; width: 20px; bottom: 0; background: #e0a0e6; }
.bub { position: absolute; width: 20px; height: 20px; border-radius: 50%; font-weight: 400; font-size: 14px; line-height: 20px; text-align: center; }
.pink { left: 25px; top: 3px; background: #ec407a; color: #f3c4d4; font-size: 12px; }
.violet { left: 26px; top: 4px; background: #dfa0e6; color: #1a1a1a; }
.tray { flex: 1; display: flex; align-items: center; justify-content: flex-end; padding-right: 27px; }
.eng { margin: 0 23px 0 26px; }
.tray svg + svg { margin-left: 10px; }
.clock { width: 96px; margin-left: 1px; text-align: right; letter-spacing: .009em; }
.bell { margin-left: 11px; }
```
